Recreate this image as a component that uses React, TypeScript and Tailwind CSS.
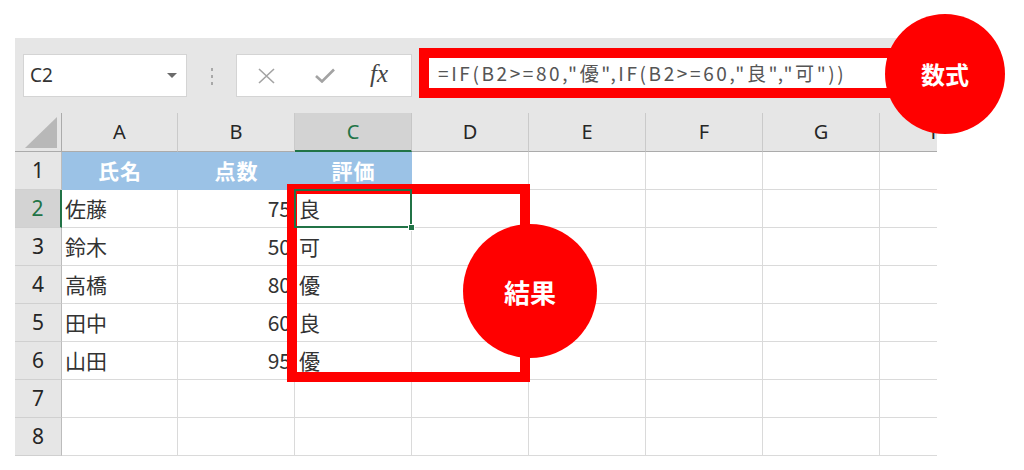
import React from "react";

const cols = ["A", "B", "C", "D", "E", "F", "G", "H"];
const data: string[][] = [
  ["佐藤", "75", "良"],
  ["鈴木", "50", "可"],
  ["高橋", "80", "優"],
  ["田中", "60", "良"],
  ["山田", "95", "優"],
];

const jp = { fontFamily: '"Noto Sans CJK JP", "Noto Sans", sans-serif' };
const lat = { fontFamily: '"Noto Sans", "Noto Sans CJK JP", sans-serif' };

function Cell({ children, className = "" }: { children?: React.ReactNode; className?: string }) {
  return (
    <div className={`h-[38px] border-r border-b border-[#dadada] bg-white flex items-center ${className}`}>
      {children}
    </div>
  );
}

export default function App() {
  const rows = Array.from({ length: 8 }, (_, i) => i + 1);
  return (
    <div className="relative w-[1024px] h-[470px] bg-white overflow-hidden pt-[38px] pl-[15px]" style={jp}>
      <div className="w-[922px] bg-[#e6e6e6] overflow-hidden">
        {/* formula bar */}
        <div className="h-[75px] flex items-start">
          <div className="ml-[8px] mt-[16px] w-[164px] h-[43px] bg-white border border-[#d4d4d4] flex items-center justify-between pl-[6px] pr-[9px]">
            <span className="text-[19px] text-[#333]" style={lat}>C2</span>
            <svg width="10" height="5" viewBox="0 0 10 5"><path d="M0 0 L10 0 L5 5 Z" fill="#6b6b6b" /></svg>
          </div>
          <div className="w-[49px] h-[75px] flex flex-col items-center justify-center gap-[4px] pt-[1px]">
            <div className="w-[2px] h-[3px] bg-[#a8a8a8]" />
            <div className="w-[2px] h-[3px] bg-[#a8a8a8]" />
            <div className="w-[2px] h-[3px] bg-[#a8a8a8]" />
          </div>
          <div className="mt-[16px] w-[176px] h-[43px] bg-white border border-[#d4d4d4] flex items-center">
            <svg className="ml-[21px]" width="17" height="16" viewBox="0 0 17 16">
              <path d="M1 1 L16 15 M16 1 L1 15" stroke="#a3a3a3" strokeWidth="1.6" fill="none" />
            </svg>
            <svg className="ml-[40px]" width="20" height="15" viewBox="0 0 20 15">
              <path d="M1 8 L7 13.5 L19 1.5" stroke="#a3a3a3" strokeWidth="2.6" fill="none" />
            </svg>
            <span className="ml-[35px] text-[25px] italic text-[#444] leading-none -mt-[4px]" style={{ fontFamily: '"Liberation Serif", "DejaVu Serif", serif' }}>fx</span>
          </div>
          <div className="ml-[7px] mt-[10px] w-[478px] h-[50px] bg-white border-[10px] border-[#ff0000] flex items-center pl-[9px] overflow-hidden">
            <span className="text-[19px] text-[#555] whitespace-nowrap tracking-[2.6px]">=IF(B2&gt;=80,"優",IF(B2&gt;=60,"良","可"))</span>
          </div>
        </div>

        {/* grid */}
        <div className="grid grid-cols-[47px_116px_117px_117px_117px_117px_117px_117px_117px] w-[982px]">
          {/* header row */}
          <div className="h-[39px] border-r border-b border-[#ababab] flex items-end justify-end pr-[4px] pb-[3px]">
            <svg width="32" height="31" viewBox="0 0 32 31"><path d="M32 0 L32 31 L0 31 Z" fill="#b8b8b8" /></svg>
          </div>
          {cols.map((c) =>
            c === "C" ? (
              <div key={c} className="h-[39px] bg-[#d3d3d3] border-r border-[#c6c6c6] border-b-2 border-b-[#217346] flex items-center justify-center text-[20px] text-[#217346]" style={lat}>
                {c}
              </div>
            ) : (
              <div key={c} className="h-[39px] border-r border-[#cacaca] border-b border-b-[#ababab] flex items-center justify-center text-[20px] text-[#262626]" style={lat}>
                {c}
              </div>
            )
          )}

          {rows.map((r) => {
            const d = r >= 2 && r <= 6 ? data[r - 2] : null;
            return (
              <React.Fragment key={r}>
                {r === 2 ? (
                  <div className="h-[38px] bg-[#d3d3d3] border-r-2 border-[#217346] border-b border-b-[#d0d0d0] flex items-center justify-center text-[21px] text-[#217346]" style={lat}>
                    {r}
                  </div>
                ) : (
                  <div className="h-[38px] border-r border-[#bcbcbc] border-b border-b-[#d0d0d0] flex items-center justify-center text-[21px] text-[#262626]" style={lat}>
                    {r}
                  </div>
                )}
                {r === 1 ? (
                  <>
                    {["氏名", "点数", "評価"].map((t) => (
                      <div key={t} className="h-[38px] bg-[#9bc2e6] flex items-center justify-center text-[21px] font-bold text-white tracking-[1px]">
                        {t}
                      </div>
                    ))}
                  </>
                ) : (
                  <>
                    <Cell className="pl-[3px] text-[21px] text-[#333]">{d ? d[0] : ""}</Cell>
                    <Cell className="justify-end pr-[3px] text-[21px] text-[#333]">{d ? d[1] : ""}</Cell>
                    <Cell className="relative pl-[4px] text-[21px] text-[#333]">
                      {d ? d[2] : ""}
                      {r === 2 && (
                        <div className="absolute z-10 left-[-1px] top-[-1px] right-[-1px] bottom-[-1px] border-2 border-[#217346]">
                          <div className="absolute right-[-5px] bottom-[-5px] w-[7px] h-[7px] bg-[#217346] border border-white" />
                        </div>
                      )}
                    </Cell>
                  </>
                )}
                {["D", "E", "F", "G", "H"].map((c) => (
                  <Cell key={c} />
                ))}
              </React.Fragment>
            );
          })}
        </div>
      </div>

      {/* annotations */}
      <div className="absolute left-[287px] top-[184px] w-[243px] h-[198px] border-[10px] border-[#ff0000]" />
      <div className="absolute left-[463px] top-[224px] w-[134px] h-[134px] rounded-full bg-[#ff0000] flex items-center justify-center text-white text-[26px] font-bold">
        結果
      </div>
      <div className="absolute left-[885px] top-[14px] w-[120px] h-[120px] rounded-full bg-[#ff0000] flex items-center justify-center text-white text-[24px] font-bold">
        数式
      </div>
    </div>
  );
}
